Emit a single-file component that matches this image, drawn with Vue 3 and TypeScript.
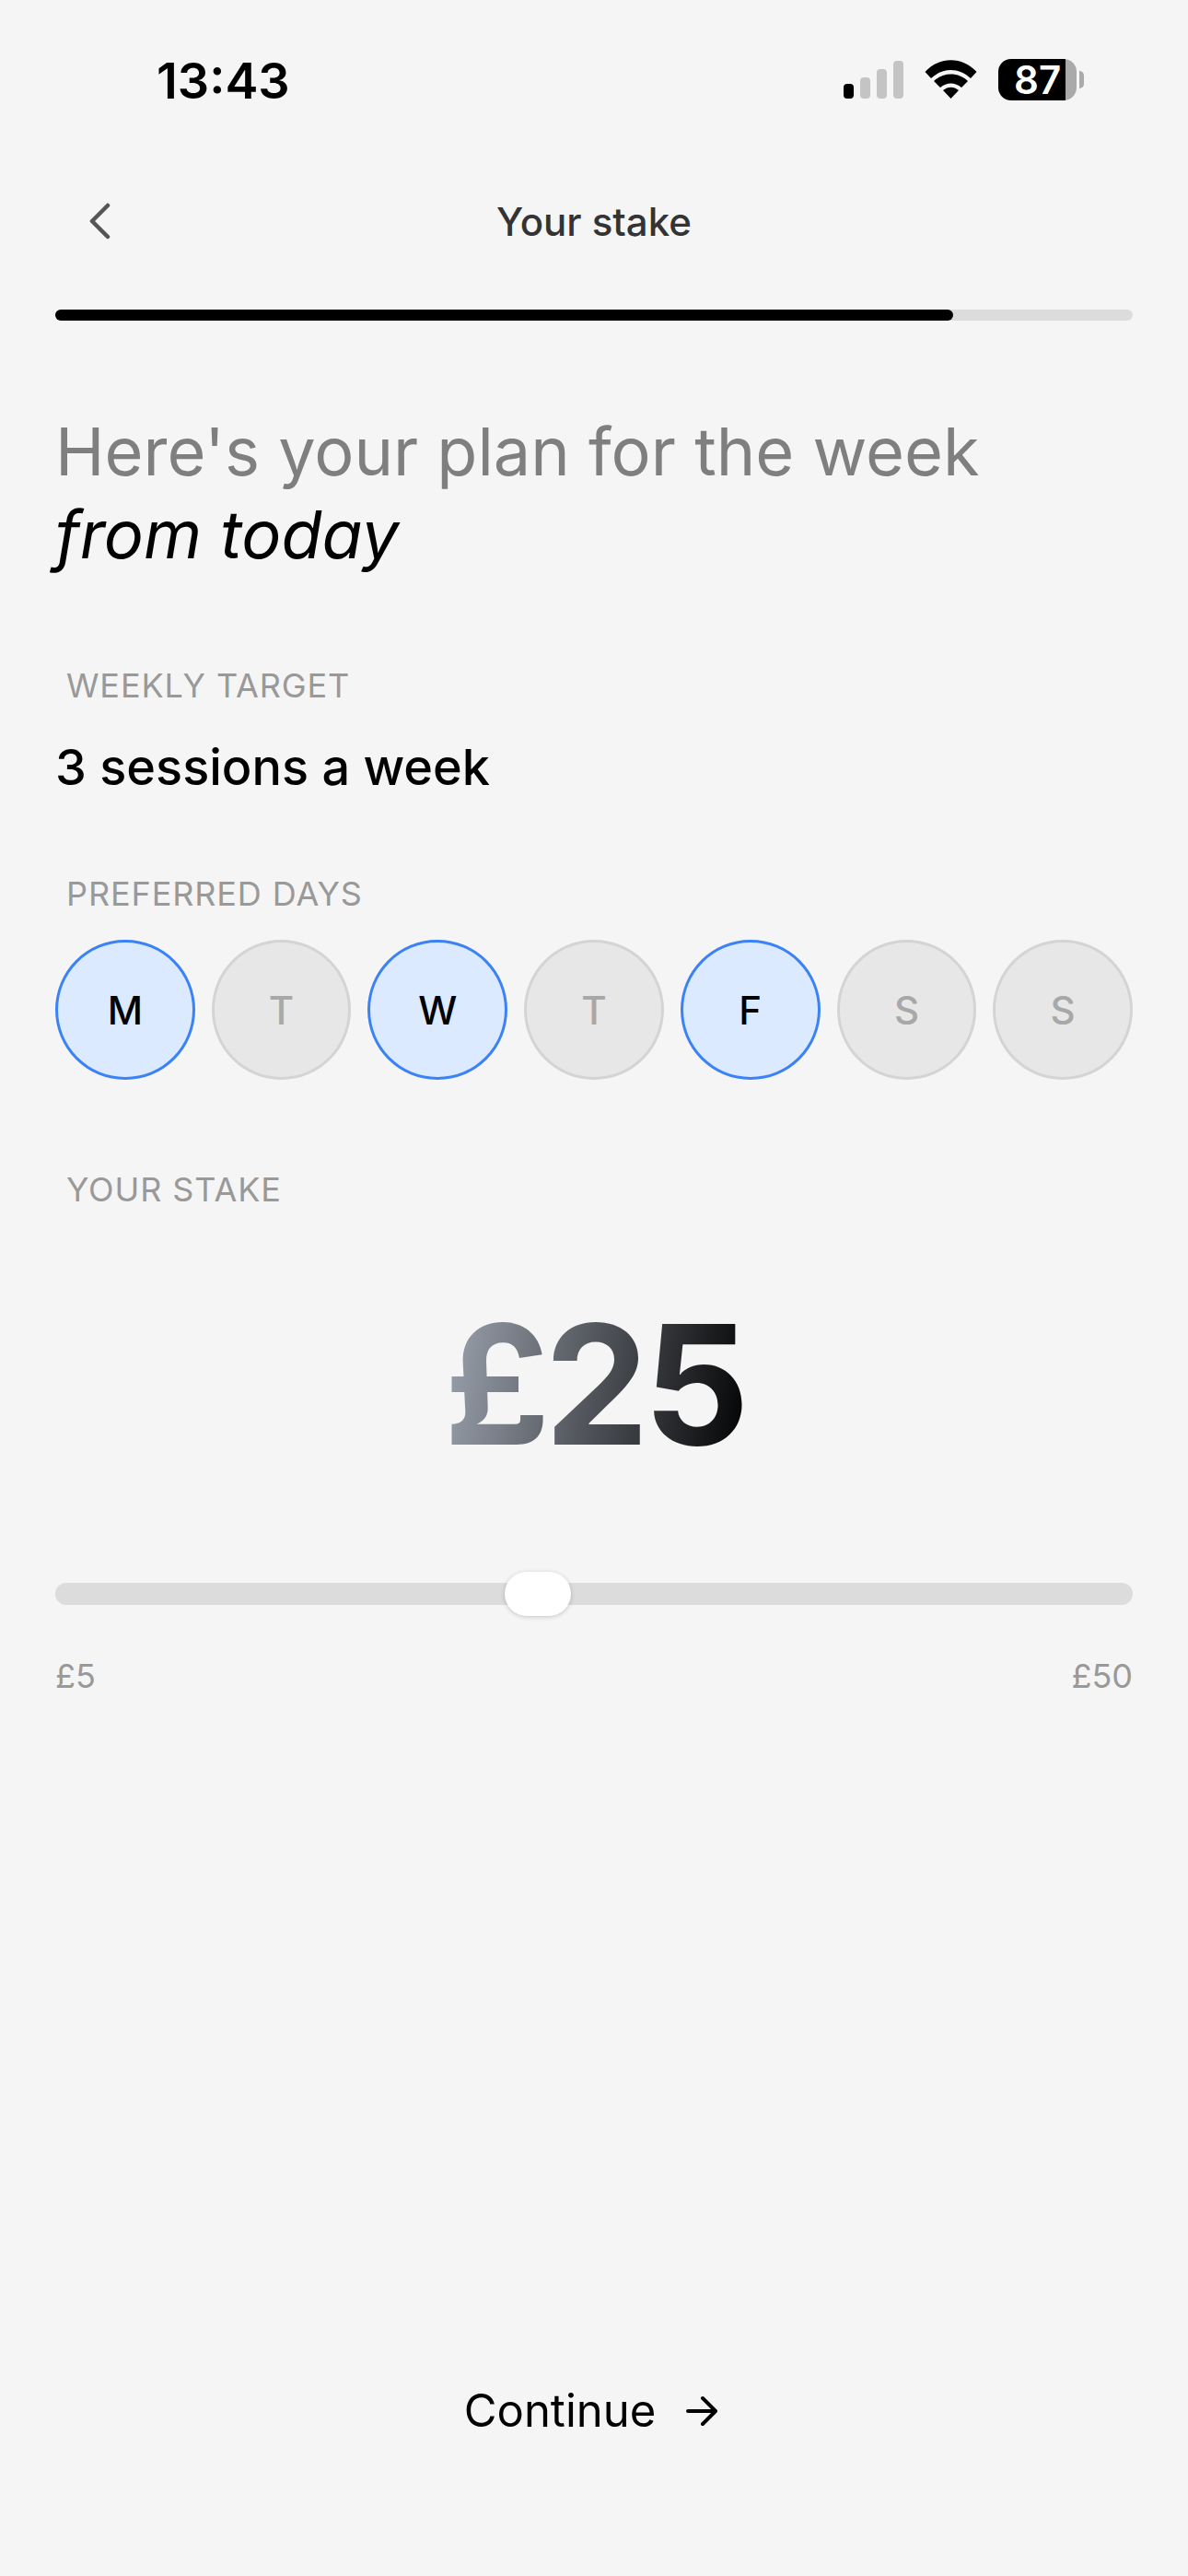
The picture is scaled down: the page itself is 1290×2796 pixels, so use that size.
<script setup lang="ts">
// Weekly stake step of the onboarding flow
const days = [
  { label: 'M', on: true },
  { label: 'T', on: false },
  { label: 'W', on: true },
  { label: 'T', on: false },
  { label: 'F', on: true },
  { label: 'S', on: false },
  { label: 'S', on: false }
]
const progress = 83.3
const thumbLeft = 41.7
</script>

<template>
  <div class="screen">
    <header class="status">
      <span class="time">13:43</span>
      <div class="status-icons">
        <div class="signal">
          <i class="bar b1 on"></i>
          <i class="bar b2"></i>
          <i class="bar b3"></i>
          <i class="bar b4"></i>
        </div>
        <svg class="wifi" width="57" height="42" viewBox="0 0 57 42" fill="#000">
          <path d="M0.5 13C16-4 41-4 56.5 13L50 20C37 8 20 8 7 20Z" />
          <path d="M10 23C20 13 37 13 47 23L40 30C33 24 24 24 17 30Z" />
          <path d="M20 33C25 28.5 32 28.5 37 33L28.5 42Z" />
        </svg>
        <div class="battery">
          <div class="battery-body"><span>87</span></div>
          <i class="battery-nub"></i>
        </div>
      </div>
    </header>

    <nav class="nav">
      <button class="back" aria-label="Back">
        <svg width="24" height="40" viewBox="0 0 24 40" fill="none" stroke="#555" stroke-width="4.5" stroke-linecap="round" stroke-linejoin="round">
          <path d="M21 3L4 20L21 37" />
        </svg>
      </button>
      <span class="nav-title">Your stake</span>
    </nav>

    <div class="progress">
      <div class="progress-fill" :style="{ width: progress + '%' }"></div>
    </div>

    <h1 class="heading">Here's your plan for the week<br><em>from today</em></h1>

    <div class="label target-label">WEEKLY TARGET</div>
    <div class="target">3 sessions a week</div>

    <div class="label days-label">PREFERRED DAYS</div>
    <div class="days">
      <div v-for="(d, i) in days" :key="i" class="day" :class="{ on: d.on }">{{ d.label }}</div>
    </div>

    <div class="label stake-label">YOUR STAKE</div>
    <div class="amount-row"><span class="amount">£25</span></div>

    <div class="slider">
      <div class="thumb" :style="{ left: thumbLeft + '%' }"></div>
    </div>
    <div class="range">
      <span>£5</span>
      <span>£50</span>
    </div>

    <button class="continue">
      <span>Continue</span>
      <svg width="36" height="36" viewBox="0 0 36 36" fill="none" stroke="#000" stroke-width="4" stroke-linecap="round" stroke-linejoin="round">
        <path d="M3 18H33M19 4L33 18L19 32" />
      </svg>
    </button>
  </div>
</template>

<style>
html,
body {
  margin: 0;
  background: #f5f5f5;
}
</style>

<style scoped>
.screen {
  width: 1290px;
  height: 2796px;
  box-sizing: border-box;
  display: flex;
  flex-direction: column;
  padding: 0 60px;
  background: #f5f5f5;
  color: #000;
  font-family: Inter, "Liberation Sans", sans-serif;
  overflow: hidden;
}

.status {
  height: 176px;
  flex: none;
  display: flex;
  justify-content: space-between;
  align-items: flex-start;
  padding: 54px 0 0 110px;
  box-sizing: border-box;
}

.time {
  font-size: 54px;
  line-height: 67px;
  font-weight: 600;
}

.status-icons {
  display: flex;
  align-items: flex-end;
  margin: 10px 53px 0 0;
}

.signal {
  display: flex;
  align-items: flex-end;
  gap: 7px;
  height: 41px;
}

.bar {
  width: 11px;
  border-radius: 4px;
  background: #c4c4c4;
}
.bar.on { background: #000; }
.b1 { height: 16px; }
.b2 { height: 23px; }
.b3 { height: 32px; }
.b4 { height: 41px; }

.wifi {
  margin-left: 23px;
}

.battery {
  display: flex;
  align-items: center;
  margin-left: 23px;
  margin-bottom: -2px;
}

.battery-body {
  width: 85px;
  height: 45px;
  box-sizing: border-box;
  border-radius: 14px;
  background: linear-gradient(90deg, #000 86%, #aaa 86%);
  color: #fff;
  font-size: 42px;
  font-weight: 600;
  line-height: 45px;
  padding-left: 17px;
}

.battery-nub {
  width: 5px;
  height: 19px;
  margin-left: 3px;
  background: #aaa;
  border-radius: 0 8px 8px 0;
}

.nav {
  height: 128px;
  flex: none;
  display: flex;
  align-items: center;
  justify-content: center;
  position: relative;
}

.back {
  position: absolute;
  left: 36px;
  top: 44px;
  padding: 0;
  border: 0;
  background: none;
  line-height: 0;
}

.nav-title {
  font-size: 42px;
  font-weight: 500;
  color: #333;
}

.progress {
  height: 12px;
  flex: none;
  margin-top: 32px;
  border-radius: 6px;
  background: #dcdcdc;
}

.progress-fill {
  height: 100%;
  border-radius: 6px;
  background: #000;
}

.heading {
  margin: 97px 0 0;
  font-size: 72px;
  line-height: 90px;
  font-weight: 400;
  color: #7f7f7f;
}

.heading em {
  color: #000;
  font-style: italic;
}

.label {
  padding-left: 12px;
  font-size: 36px;
  line-height: 44px;
  color: #999;
  letter-spacing: 0.9px;
}

.target-label {
  margin-top: 97px;
}

.target {
  margin-top: 34px;
  font-size: 54px;
  line-height: 66px;
  font-weight: 500;
}

.days-label {
  margin-top: 82px;
}

.days {
  display: flex;
  gap: 18px;
  margin-top: 28px;
}

.day {
  flex: 1;
  height: 152px;
  box-sizing: border-box;
  display: flex;
  align-items: center;
  justify-content: center;
  border: 3px solid #d4d4d4;
  border-radius: 50%;
  background: #e7e7e7;
  color: #a8a8a8;
  font-size: 42px;
  font-weight: 500;
}

.day.on {
  border-color: #3b82f6;
  background: #dbeafe;
  color: #000;
}

.stake-label {
  margin-top: 97px;
}

.amount-row {
  display: flex;
  justify-content: center;
  margin-top: 81px;
}

.amount {
  font-size: 180px;
  line-height: 218px;
  font-weight: 700;
  letter-spacing: -6px;
  background: linear-gradient(100deg, #a0a7b3, #000);
  -webkit-background-clip: text;
  background-clip: text;
  color: transparent;
}

.slider {
  position: relative;
  height: 24px;
  flex: none;
  margin-top: 106px;
  border-radius: 12px;
  background: #dcdcdc;
}

.thumb {
  position: absolute;
  top: -12px;
  width: 72px;
  height: 48px;
  border-radius: 24px;
  background: #fff;
  box-shadow: 0 1px 5px rgba(0, 0, 0, 0.2);
}

.range {
  display: flex;
  justify-content: space-between;
  margin-top: 55px;
  font-size: 36px;
  line-height: 44px;
  color: #999;
}

.continue {
  display: flex;
  align-items: center;
  justify-content: center;
  gap: 32px;
  margin-top: auto;
  margin-bottom: 148px;
  padding: 0 6px 0 0;
  border: 0;
  background: none;
  font-family: inherit;
  font-size: 49px;
  font-weight: 400;
  line-height: 62px;
  color: #000;
}
</style>
